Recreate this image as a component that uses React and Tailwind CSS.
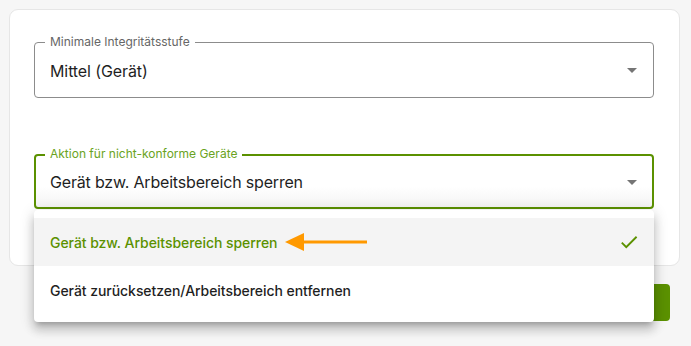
import React from "react";

const Caret = () => (
  <svg width="24" height="24" viewBox="0 0 24 24" className="text-[#757575]" fill="currentColor">
    <path d="M7 10l5 5 5-5z" />
  </svg>
);

export default function App() {
  return (
    <div
      className="relative w-[691px] h-[346px] bg-[#f6f6f6] overflow-hidden"
      style={{ fontFamily: "Inter, 'Noto Sans', sans-serif" }}
    >
      <div className="pt-[9px] pl-[9px] pr-[11px]">
        <div className="h-[257px] rounded-[9px] border border-[#e6e6e6] bg-white pl-[24px] pr-[25px] pt-[32px]">
          {/* Field 1 */}
          <div className="relative h-[56px] rounded-[4px] border border-[#8c8c8c] flex items-center justify-between pl-[15px] pr-[9px]">
            <span className="absolute left-[10px] top-[-9px] bg-white px-[5px] text-[12px] leading-[16px] text-[#666]">
              Minimale Integritätsstufe
            </span>
            <span className="text-[16px] text-[#1f1f1f] pt-[1px] tracking-[-0.1px]">Mittel (Gerät)</span>
            <Caret />
          </div>
          {/* Field 2 */}
          <div className="relative mt-[56px] h-[55px] rounded-[4px] border-2 border-[#5b9100] flex items-center justify-between pl-[14px] pr-[8px] bg-gradient-to-b from-white from-60% to-[#f4f4f4]">
            <span className="absolute left-[9px] top-[-10px] bg-white px-[5px] text-[12px] leading-[16px] text-[#6aa322]">
              Aktion für nicht-konforme Geräte
            </span>
            <span className="text-[16px] text-[#1f1f1f] tracking-[-0.18px]">Gerät bzw. Arbeitsbereich sperren</span>
            <Caret />
          </div>
        </div>
      </div>

      {/* Button behind menu */}
      <div className="absolute left-[600px] top-[284px] w-[70px] h-[37px] rounded-[4px] bg-[#5b9100]" />

      {/* Dropdown menu */}
      <div className="absolute left-[34px] top-[210px] w-[620px] rounded-[4px] bg-white py-[8px] shadow-[0_5px_5px_-3px_rgba(0,0,0,0.2),0_8px_10px_1px_rgba(0,0,0,0.14),0_3px_14px_2px_rgba(0,0,0,0.12)]">
        <div className="h-[48px] bg-[#f4f4f4] flex items-center justify-between pl-[16px] pr-[14px]">
          <div className="flex items-center">
            <span className="text-[14px] font-medium text-[#5b9100] tracking-[-0.05px]">Gerät bzw. Arbeitsbereich sperren</span>
            <svg width="86" height="20" viewBox="0 0 86 20" className="ml-[7px]">
              <polygon points="1,10 20,1 20,19" fill="#ff9900" />
              <rect x="18" y="8.5" width="65" height="3" fill="#ff9900" />
            </svg>
          </div>
          <svg width="22" height="22" viewBox="0 0 24 24" fill="#5b9100">
            <path d="M9 16.17L4.83 12l-1.42 1.41L9 19 21 7l-1.41-1.41z" />
          </svg>
        </div>
        <div className="h-[48px] flex items-center pl-[16px]">
          <span className="text-[14px] font-medium text-[#1f1f1f] tracking-[-0.05px]">Gerät zurücksetzen/Arbeitsbereich entfernen</span>
        </div>
      </div>
    </div>
  );
}
